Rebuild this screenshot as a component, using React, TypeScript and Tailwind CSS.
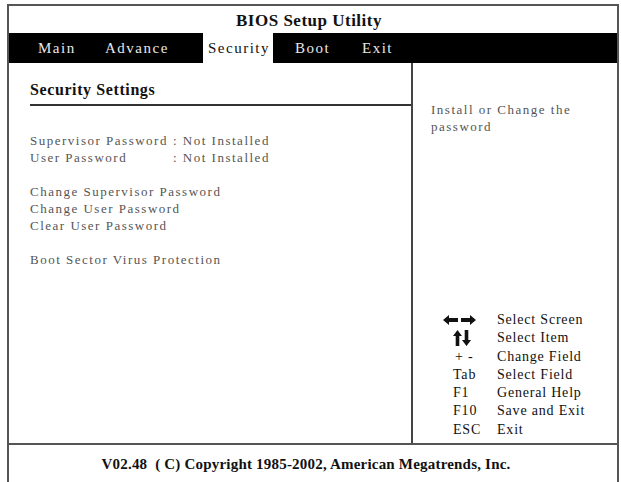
import React from "react";

const tabs = [
  { label: "Main", w: "w-[96px]", pl: "pl-[29px]", active: false },
  { label: "Advance", w: "w-[98px]", pl: "pl-0", active: false },
  { label: "Security", w: "w-[70px]", pl: "pl-[5px]", active: true },
  { label: "Boot", w: "w-[89px]", pl: "pl-[22px]", active: false },
  { label: "Exit", w: "w-[60px]", pl: "pl-0", active: false },
];

function LeftRight() {
  return (
    <svg width="33" height="10" viewBox="0 0 33 10" className="-ml-[10px]">
      <path d="M0 5 L6 0 L6 3 L15 3 L15 7 L6 7 L6 10 Z" fill="#111" />
      <path d="M33 5 L27 0 L27 3 L18 3 L18 7 L27 7 L27 10 Z" fill="#111" />
    </svg>
  );
}

function UpDown() {
  return (
    <svg width="18" height="16" viewBox="0 0 18 16">
      <path d="M4.5 0 L9 6 L6.3 6 L6.3 16 L2.7 16 L2.7 6 L0 6 Z" fill="#111" />
      <path d="M13.5 16 L18 10 L15.3 10 L15.3 0 L11.7 0 L11.7 10 L9 10 Z" fill="#111" />
    </svg>
  );
}

const legend: { key: React.ReactNode; text: string }[] = [
  { key: <LeftRight />, text: "Select Screen" },
  { key: <UpDown />, text: "Select Item" },
  { key: <span className="pl-[2px]">+ -</span>, text: "Change Field" },
  { key: "Tab", text: "Select Field" },
  { key: "F1", text: "General Help" },
  { key: "F10", text: "Save and Exit" },
  { key: "ESC", text: "Exit" },
];

export default function App() {
  return (
    <div
      className="w-[621px] h-[482px] overflow-hidden bg-white pl-[7px] pt-[4px] pr-[2px]"
      style={{ fontFamily: '"Liberation Serif", "Times New Roman", serif' }}
    >
      <div className="h-[500px] border-2 border-[#555] flex flex-col">
        <div className="h-[27px] shrink-0 flex items-center justify-center text-[17px] font-bold tracking-[0.5px] text-[#111] pr-[8px] pt-[2px]">
          BIOS Setup Utility
        </div>

        <div className="h-[30px] shrink-0 bg-black flex items-stretch text-[15px] tracking-[1.5px]">
          {tabs.map((t) => (
            <div
              key={t.label}
              className={`${t.w} ${t.pl} shrink-0 flex items-center ${
                t.active ? "bg-white text-[#111]" : "text-[#e8e8e8]"
              }`}
            >
              {t.label}
            </div>
          ))}
        </div>

        <div className="h-[380px] shrink-0 flex">
          <div className="w-[402px] shrink-0 pl-[21px] pt-[17px]">
            <div className="h-[20px] leading-[20px] text-[16px] font-bold tracking-[0.6px] text-[#111]">
              Security Settings
            </div>
            <div className="mt-[4px] h-[2px] bg-[#333]" />
            <div className="mt-[26px] text-[13px] leading-[17px] tracking-[1.5px] text-[#555]">
              <div className="flex">
                <span className="w-[143px]">Supervisor Password</span>
                <span>: Not Installed</span>
              </div>
              <div className="flex">
                <span className="w-[143px]">User Password</span>
                <span>: Not Installed</span>
              </div>
              <div className="h-[17px]" />
              <div>Change Supervisor Password</div>
              <div>Change User Password</div>
              <div>Clear User Password</div>
              <div className="h-[17px]" />
              <div>Boot Sector Virus Protection</div>
            </div>
          </div>

          <div className="flex-1 border-l-2 border-[#444] flex flex-col justify-between pb-[4px]">
            <div className="pl-[18px] pt-[38px] text-[13px] leading-[17px] tracking-[1.5px] text-[#555]">
              Install or Change the
              <br />
              password
            </div>
            <div className="pl-[30px] text-[14px] leading-[18.3px] tracking-[0.8px] text-[#111]">
              {legend.map((row) => (
                <div key={row.text} className="flex items-center h-[18.3px]">
                  <div className="w-[54px] pl-[10px] flex items-center">{row.key}</div>
                  <div>{row.text}</div>
                </div>
              ))}
            </div>
          </div>
        </div>

        <div className="border-t-2 border-[#555] h-[40px] shrink-0 flex items-center justify-center pr-[14px] text-[15px] font-bold tracking-[0.2px] text-[#111]">
          V02.48&nbsp; ( C) Copyright 1985-2002, American Megatrends, Inc.
        </div>
      </div>
    </div>
  );
}
